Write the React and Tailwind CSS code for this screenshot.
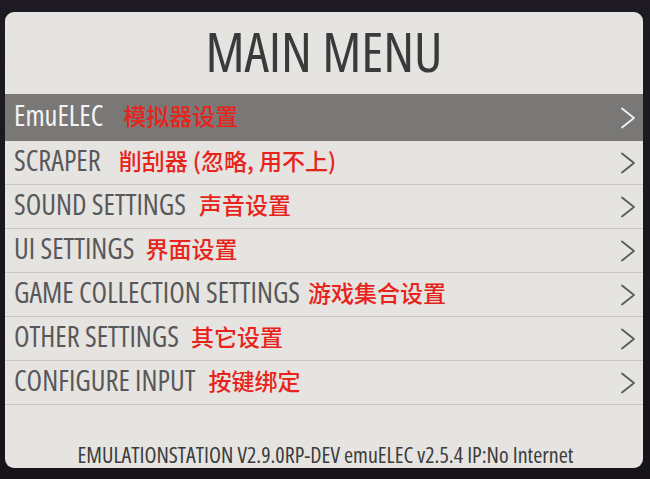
import React from "react";

const items = [
  { en: "EmuELEC", cn: "模拟器设置", gap: "ml-[20px]" },
  { en: "SCRAPER", cn: "削刮器 (忽略, 用不上)", gap: "ml-[18px]" },
  { en: "SOUND SETTINGS", cn: "声音设置", gap: "ml-[13px]" },
  { en: "UI SETTINGS", cn: "界面设置", gap: "ml-[11px]" },
  { en: "GAME COLLECTION SETTINGS", cn: "游戏集合设置", gap: "ml-[8px]" },
  { en: "OTHER SETTINGS", cn: "其它设置", gap: "ml-[12px]" },
  { en: "CONFIGURE INPUT", cn: "按键绑定", gap: "ml-[13px]" },
];

const condensed = "font-['Open_Sans','Noto_Sans',sans-serif] [font-stretch:75%]";

const Chevron = ({ selected }) => (
  <svg width="16" height="24" viewBox="0 0 16 24" fill="none">
    <path
      d="M2 2.5 L14 12 L2 21.5"
      stroke={selected ? "#f2f2f2" : "#5a5a5a"}
      strokeWidth="1.8"
      strokeLinecap="round"
      strokeLinejoin="round"
    />
  </svg>
);

const App = () => {
  return (
    <div className="w-[650px] h-[479px] bg-gradient-to-b from-[#1d1a24] to-[#161419] pt-[12px] pl-[5px] pr-[7px] pb-[11px]">
      <div className="h-full bg-[#e6e4e0] rounded-[9px] overflow-hidden flex flex-col">
        <div className="h-[82px] flex items-center justify-center">
          <h1 className={`${condensed} text-[55px] leading-[1.1] text-[#3a3a3c] pb-[3px]`}>MAIN MENU</h1>
        </div>
        <ul>
          {items.map((item, i) => {
            const selected = i === 0;
            return (
              <li
                key={item.en}
                className={`flex items-center justify-between pl-[9px] pr-[7px] ${
                  selected ? "bg-[#797876] h-[47px]" : "h-[44px] border-b border-[#c9c7c3]"
                }`}
              >
                <div className="flex items-center pb-[3px]">
                  <span
                    className={`${condensed} text-[28.5px] leading-[1.1] ${
                      selected ? "text-[#f4f4f4]" : "text-[#58585a]"
                    }`}
                  >
                    {item.en}
                  </span>
                  <span
                    className={`${item.gap} font-['Noto_Sans_CJK_SC',sans-serif] font-medium text-[23px] leading-[1.1] text-[#e8231c]`}
                  >
                    {item.cn}
                  </span>
                </div>
                <Chevron selected={selected} />
              </li>
            );
          })}
        </ul>
        <div className="flex-1 flex items-end justify-center">
          <p className={`${condensed} text-[22px] leading-[1.25] text-[#3c3c3e] pl-[3px]`}>
            EMULATIONSTATION V2.9.0RP-DEV emuELEC v2.5.4 IP:No Internet
          </p>
        </div>
      </div>
    </div>
  );
};

export default App;
